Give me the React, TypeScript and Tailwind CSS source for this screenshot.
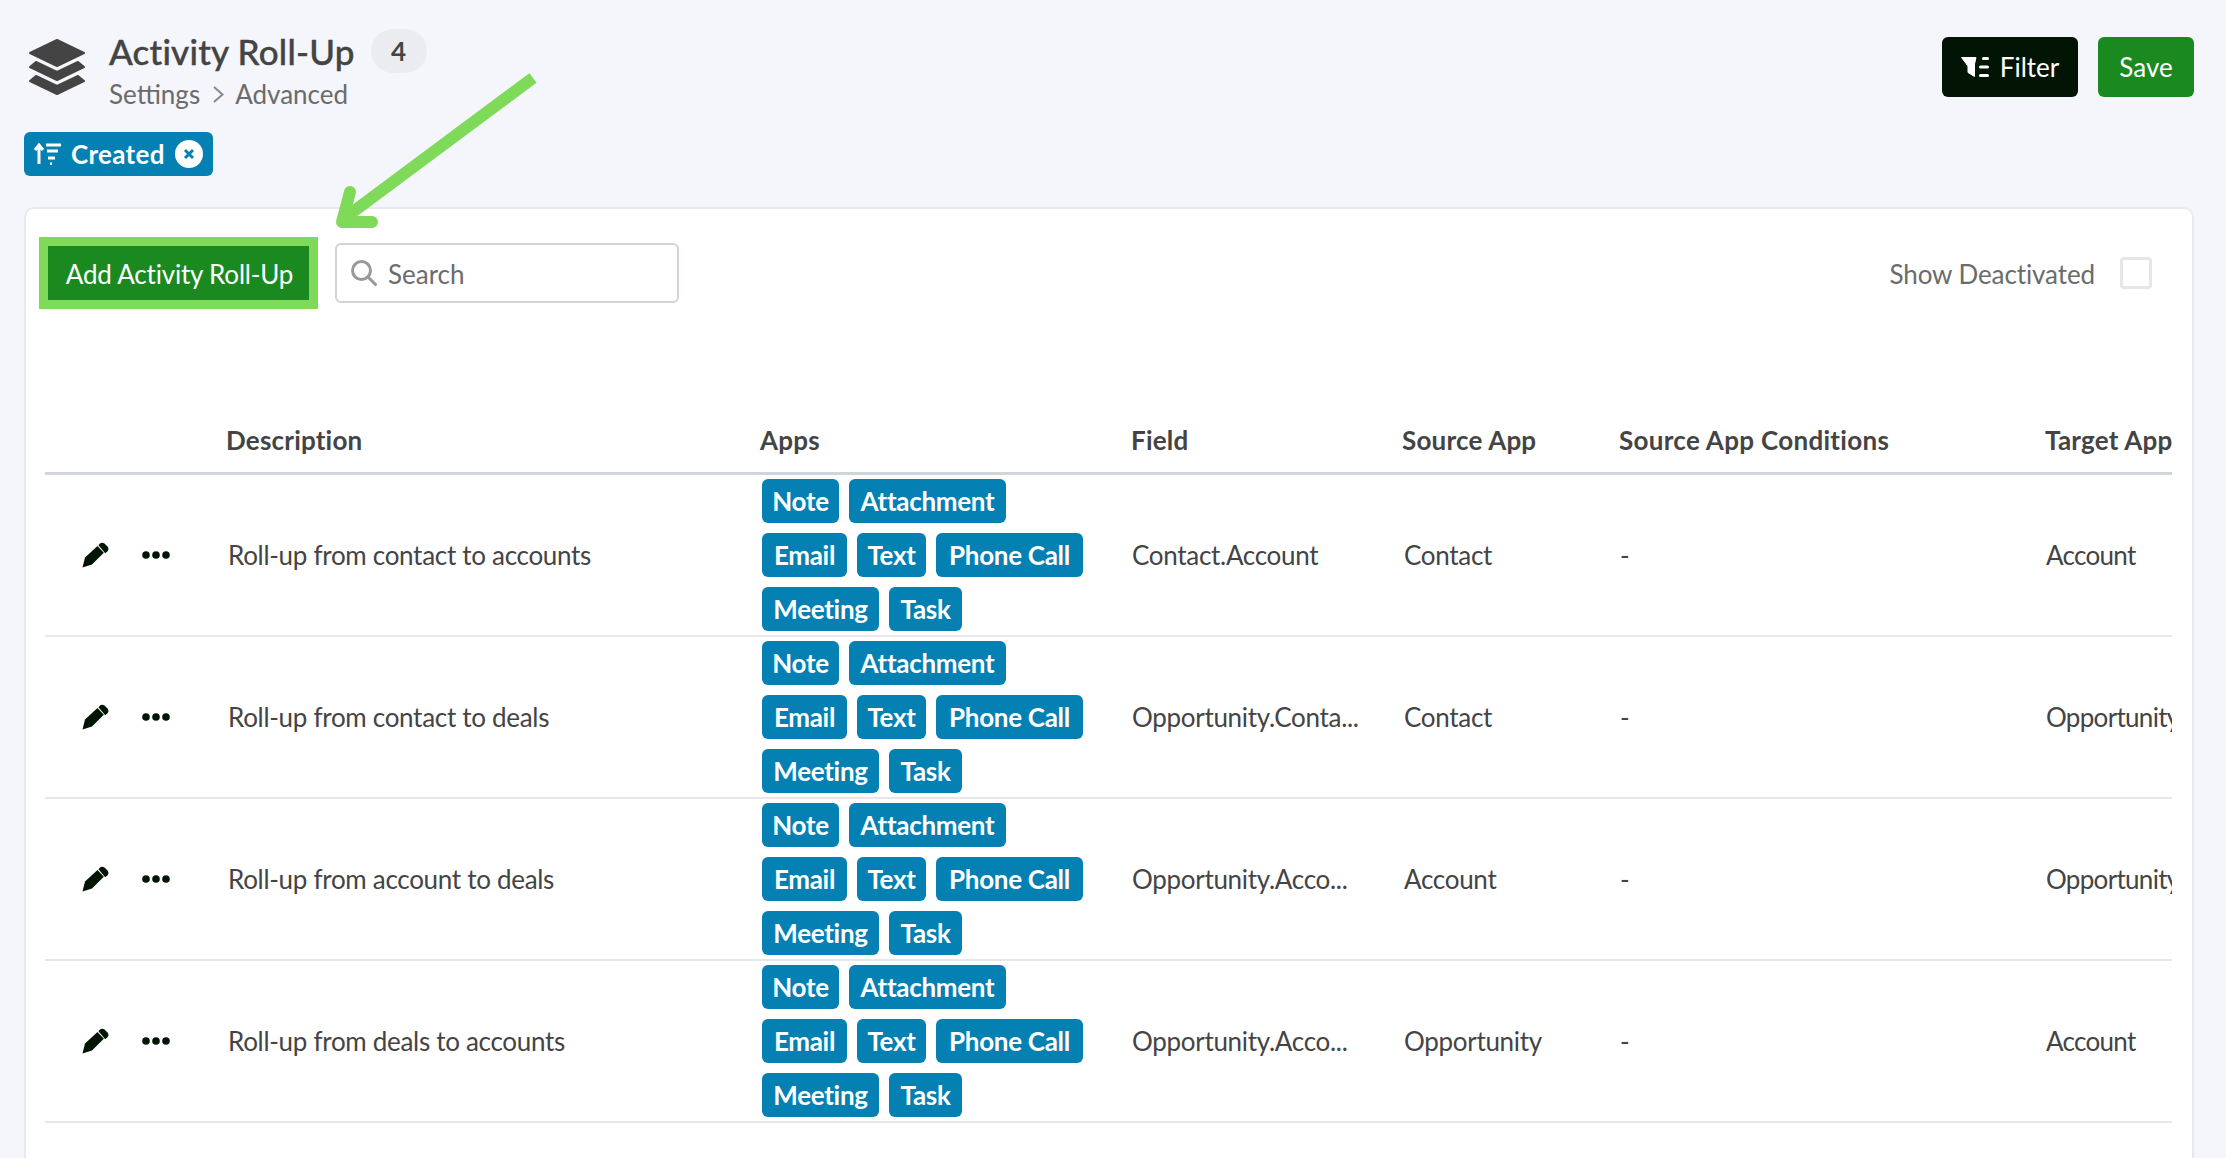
const rows = [
  { description: 'Roll-up from contact to accounts', field: 'Contact.Account', source: 'Contact', target: 'Account' },
  { description: 'Roll-up from contact to deals', field: 'Opportunity.Conta...', source: 'Contact', target: 'Opportunity' },
  { description: 'Roll-up from account to deals', field: 'Opportunity.Acco...', source: 'Account', target: 'Opportunity' },
  { description: 'Roll-up from deals to accounts', field: 'Opportunity.Acco...', source: 'Opportunity', target: 'Account' },
];

const tagRows = [
  [
    { label: 'Note', width: 'w-[77px]' },
    { label: 'Attachment', width: 'w-[157px]' },
  ],
  [
    { label: 'Email', width: 'w-[85px]' },
    { label: 'Text', width: 'w-[69px]' },
    { label: 'Phone Call', width: 'w-[147px]' },
  ],
  [
    { label: 'Meeting', width: 'w-[117px]' },
    { label: 'Task', width: 'w-[73px]' },
  ],
];

const columns = 'grid grid-cols-[181px_534px_371px_271px_217px_426px_1fr]';

function StackIcon() {
  return (
    <svg width="58" height="58" viewBox="-1 -1 58 58" fill="#444444" stroke="#444444" strokeWidth="2" strokeLinejoin="round">
      <path d="M28 1 L55 14 L28 27 L1 14 Z" />
      <path d="M7 23 L28 33 L49 23 L55 28 L28 41 L1 28 Z" />
      <path d="M7 37 L28 47 L49 37 L55 42 L28 55 L1 42 Z" />
    </svg>
  );
}

function SortIcon() {
  return (
    <svg width="27" height="22" viewBox="0 0 27 22" fill="none" stroke="#ffffff" strokeWidth="3">
      <path d="M5 21 V3 M1 7 L5 2 L9 7" />
      <path d="M12 2 H27 M13 8 H24 M14 15 H21 M16 21 H18" />
    </svg>
  );
}

function FilterIcon() {
  return (
    <svg width="28" height="20" viewBox="0 0 28 20" fill="#ffffff">
      <path d="M0.5 0.5 H15 L13.5 7 V19.5 L7 15.5 V9 Z" stroke="#ffffff" strokeLinejoin="round" />
      <rect x="21" y="0" width="7" height="3" rx="1.5" />
      <rect x="18" y="8.5" width="10" height="3" rx="1.5" />
      <rect x="18" y="17" width="10" height="3" rx="1.5" />
    </svg>
  );
}

function PencilIcon() {
  return (
    <svg width="27" height="26" viewBox="0 0 27 26" fill="#021505">
      <path d="M0.5 25.5 L3 15.5 L15.5 4 L21.8 10.7 L10 22.5 Z" />
      <path d="M17.5 2 C19 0.3 21 0.3 22.5 1.5 L25.5 4.5 C26.8 6 26.8 7.8 25.5 9.2 L23.2 11.2 L16.5 3.2 Z" />
    </svg>
  );
}

function DotsIcon() {
  return (
    <svg width="28" height="8" viewBox="0 0 28 8" fill="#021505">
      <circle cx="4" cy="4" r="3.8" />
      <circle cx="14" cy="4" r="3.8" />
      <circle cx="24" cy="4" r="3.8" />
    </svg>
  );
}

function Tag({ label, width }: { label: string; width: string }) {
  return (
    <span className={`flex h-[44px] ${width} items-center justify-center rounded-[6px] bg-[#0580b3] text-[26px] font-bold text-white`}>
      {label}
    </span>
  );
}

export default function App() {
  return (
    <div className="relative h-[1158px] overflow-hidden bg-[#f4f6fb] pl-[24px] pr-[32px] font-['Lato',sans-serif]">
      {/* Header */}
      <div className="flex h-[132px] justify-between pt-[29px]">
        <div className="flex pl-[4px]">
          <div className="mt-[9px]">
            <StackIcon />
          </div>
          <div className="ml-[23px]">
            <div className="flex h-[44px] items-center gap-[16px]">
              <h1 className="text-[35px] font-medium tracking-[0.2px] text-[#444444] [-webkit-text-stroke:0.4px_#444444]">Activity Roll-Up</h1>
              <span className="flex h-[44px] w-[56px] items-center justify-center rounded-[22px] bg-[#ebecf0] text-[26px] font-bold text-[#444444]">
                4
              </span>
            </div>
            <div className="mt-[2px] flex items-center text-[26px] text-[#6b6b6b]">
              <span>Settings</span>
              <svg className="ml-[13px] mr-[11px]" width="11" height="17" viewBox="0 0 11 17" fill="none" stroke="#888888" strokeWidth="2">
                <path d="M1 1 L9.5 8.5 L1 16" />
              </svg>
              <span>Advanced</span>
            </div>
          </div>
        </div>
        <div className="mt-[8px] flex gap-[20px]">
          <button className="flex h-[60px] w-[136px] items-center justify-center gap-[11px] rounded-[6px] bg-[#021505] text-[26px] text-white">
            <FilterIcon />
            Filter
          </button>
          <button className="h-[60px] w-[96px] rounded-[6px] bg-[#1a8a20] text-[26px] text-white">Save</button>
        </div>
      </div>

      {/* Active sort chip */}
      <div className="flex h-[44px] w-[189px] items-center rounded-[6px] bg-[#0580b3] pl-[10px] text-[26px] font-bold tracking-[0.3px] text-white">
        <SortIcon />
        <span className="ml-[10px]">Created</span>
        <span className="ml-auto mr-[10px] flex h-[28px] w-[28px] items-center justify-center rounded-full bg-white">
          <svg width="12" height="12" viewBox="0 0 12 12" stroke="#0580b3" strokeWidth="3">
            <path d="M2 2 L10 10 M10 2 L2 10" />
          </svg>
        </span>
      </div>

      {/* Card */}
      <div className="mt-[31px] h-[1000px] rounded-[10px] border-2 border-[#e8e9ee] bg-white">
        <div className="flex items-center pl-[13px] pr-[40px] pt-[28px]">
          <button className="h-[72px] w-[279px] border-[9px] border-[#7eda58] bg-[#1a8a20] pl-[2px] pt-[2px] text-[26px] tracking-[-0.2px] text-white">
            Add Activity Roll-Up
          </button>
          <div className="ml-[17px] flex h-[60px] w-[344px] items-center rounded-[6px] border-2 border-[#d0d3da] pl-[14px] text-[26px] text-[#6b6b6b]">
            <svg width="26" height="26" viewBox="0 0 26 26" fill="none" stroke="#999999" strokeWidth="3" strokeLinecap="round">
              <circle cx="10.5" cy="10.5" r="9" />
              <path d="M17 17 L24.5 24.5" />
            </svg>
            <span className="ml-[11px] pt-[2px]">Search</span>
          </div>
          <span className="ml-auto pt-[2px] text-[26px] tracking-[-0.1px] text-[#6b6b6b]">Show Deactivated</span>
          <div className="ml-[25px] h-[32px] w-[32px] rounded-[4px] border-[3px] border-[#e6e6e6]"></div>
        </div>

        {/* Table */}
        <div className="ml-[19px] mr-[20px] mt-[101px] overflow-hidden">
          <div className={`${columns} h-[65px] items-center border-b-[3px] border-[#d1d5db] pb-[2px] text-[26px] font-bold tracking-[0.2px] text-[#444444]`}>
            <div></div>
            <div>Description</div>
            <div>Apps</div>
            <div>Field</div>
            <div>Source App</div>
            <div className="tracking-[0.3px]">Source App Conditions</div>
            <div className="whitespace-nowrap">Target App</div>
          </div>
          {rows.map((row) => (
            <div key={row.description} className={`${columns} h-[162px] items-center border-b-2 border-[#e6e7eb] text-[26px] tracking-[-0.3px] text-[#444444]`}>
              <div className="flex items-center gap-[33px] pl-[37px]">
                <PencilIcon />
                <DotsIcon />
              </div>
              <div className="pl-[2px]">{row.description}</div>
              <div className="flex flex-col gap-[10px] pl-[2px]">
                {tagRows.map((tags) => (
                  <div key={tags[0].label} className="flex gap-[10px]">
                    {tags.map((tag) => (
                      <Tag key={tag.label} label={tag.label} width={tag.width} />
                    ))}
                  </div>
                ))}
              </div>
              <div className="pl-[1px] whitespace-nowrap">{row.field}</div>
              <div className="pl-[2px]">{row.source}</div>
              <div className="pl-[1px]">-</div>
              <div className="overflow-hidden pl-[1px] tracking-[-0.7px] whitespace-nowrap">{row.target}</div>
            </div>
          ))}
        </div>
      </div>

      {/* Annotation arrow */}
      <svg className="absolute left-[330px] top-[70px]" width="210" height="165" viewBox="0 0 210 165" fill="none" stroke="#7eda58" strokeWidth="12">
        <path d="M203 8 L12 150" />
        <path d="M20 122 L12 152 L42 152" strokeLinecap="round" strokeLinejoin="round" />
      </svg>
    </div>
  );
}
